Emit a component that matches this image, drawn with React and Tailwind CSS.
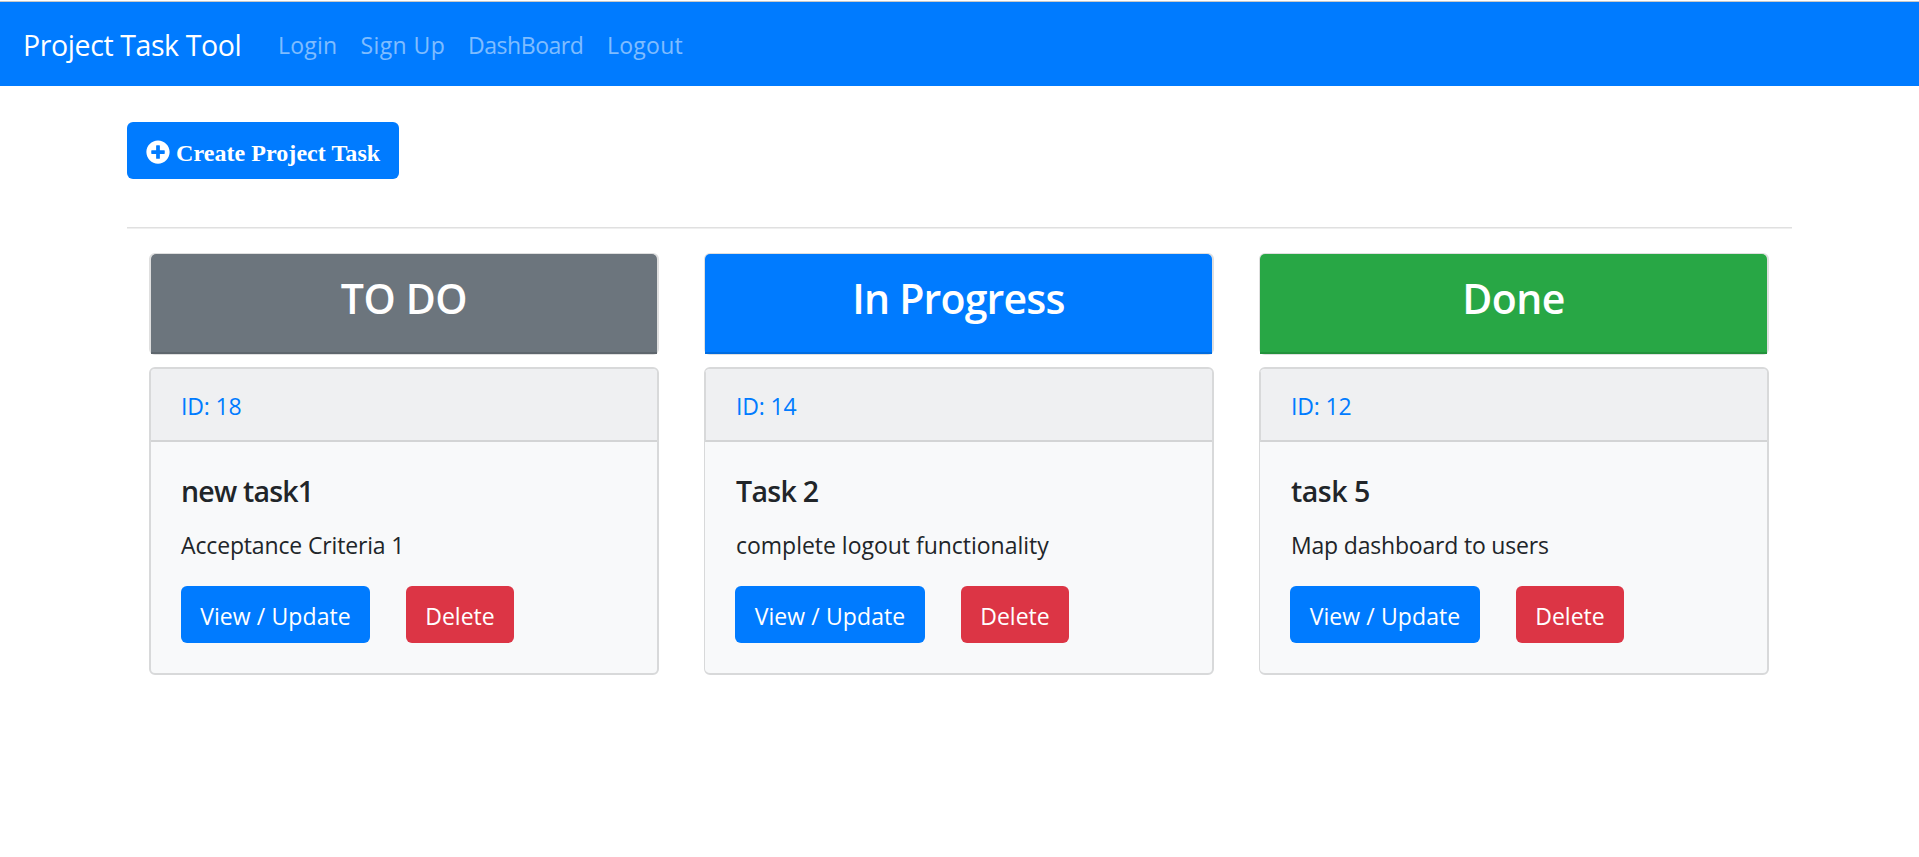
import React from "react";
import { FaPlusCircle } from "react-icons/fa";

const links = [
  { label: "Login", cls: "w-[82.5px] tracking-[0.22px]" },
  { label: "Sign Up", cls: "w-[107.5px] tracking-[0.4px]" },
  { label: "DashBoard", cls: "w-[139px] tracking-[-0.45px]" },
  { label: "Logout", cls: "w-[100px] tracking-[0.25px]" },
];

const columns = [
  {
    title: "TO DO",
    bg: "bg-[#6c757d]",
    titleCls: "tracking-[-0.4px]",
    edge: "border-l-2",
    headEdge: "border-l-0",
    task: {
      id: 18,
      name: "new task1",
      nameCls: "tracking-[-0.8px]",
      text: "Acceptance Criteria 1",
      textCls: "tracking-[-0.15px]",
      buttonCls: "w-[189px]",
    },
  },
  {
    title: "In Progress",
    bg: "bg-[#007bff]",
    titleCls: "tracking-[-0.8px]",
    edge: "border-l",
    headEdge: "border-l",
    task: {
      id: 14,
      name: "Task 2",
      nameCls: "pl-px tracking-[-0.7px]",
      text: "complete logout functionality",
      textCls: "pl-px tracking-[-0.02px]",
      buttonCls: "w-[190px]",
    },
  },
  {
    title: "Done",
    bg: "bg-[#28a745]",
    titleCls: "tracking-[-0.5px]",
    edge: "border-l",
    headEdge: "border-l",
    task: {
      id: 12,
      name: "task 5",
      nameCls: "pl-px tracking-[-0.5px]",
      text: "Map dashboard to users",
      textCls: "pl-px tracking-[-0.19px]",
      buttonCls: "w-[190px]",
    },
  },
];

function Navbar() {
  return (
    <nav className="flex h-[86px] items-center border-t border-white bg-[#007bff] shadow-[inset_0_1px_0_#c8c8c8] pl-[23px] pt-[3px] whitespace-nowrap">
      <a className="w-[255px] text-[28.5px] leading-[45px] tracking-[-0.4px] text-white">
        Project Task Tool
      </a>
      {links.map((l) => (
        <a key={l.label} className={`text-[23px] leading-9 text-white/50 ${l.cls}`}>
          {l.label}
        </a>
      ))}
    </nav>
  );
}

function TaskCard({ task, edge, headEdge }) {
  return (
    <article
      className={`mt-3 flex h-[308px] flex-col overflow-hidden rounded-[6px] border-y-2 border-r-2 border-[#d8d9da] bg-[#f8f9fa] ${edge}`}
    >
      <div
        className={`h-[73px] border-b-2 border-b-[#d3d4d5] border-l-[#d8d9da] bg-[#eff0f2] pl-[30px] pt-[19px] text-[23px] leading-9 tracking-[-0.15px] text-[#007bff] ${headEdge}`}
      >
        ID: {task.id}
      </div>
      <div className="pl-[30px] pt-[31px] whitespace-nowrap">
        <h5 className={`text-[28.5px] leading-9 font-semibold ${task.nameCls}`}>{task.name}</h5>
        <p className={`mt-[18px] text-[23px] leading-9 ${task.textCls}`}>{task.text}</p>
        <div className="mt-[23px] flex gap-9 text-[23px] text-white">
          <button
            className={`flex h-[57px] items-center justify-center rounded-[6px] bg-[#007bff] pt-[3px] tracking-[0.1px] ${task.buttonCls}`}
          >
            View / Update
          </button>
          <button className="flex h-[57px] w-[108px] items-center justify-center rounded-[6px] bg-[#dc3545] pt-[3px]">
            Delete
          </button>
        </div>
      </div>
    </article>
  );
}

export default function App() {
  return (
    <div className="h-[857px] overflow-hidden bg-white font-['Open_Sans','Noto_Sans',sans-serif] text-[#212529]">
      <Navbar />
      <main className="ml-[127px] w-[1665px]">
        <div className="pt-9">
          <button className="flex h-[57px] w-[272px] items-center gap-[6px] rounded-[6px] bg-[#007bff] pl-[19px] text-white whitespace-nowrap">
            <FaPlusCircle className="mt-[3px] size-6 shrink-0" />
            <span className="pt-[5px] font-['Liberation_Serif',serif] text-2xl font-bold tracking-[0.06px]">
              Create Project Task
            </span>
          </button>
        </div>
        <hr className="mt-[48px] h-[2px] border-0 border-t border-[#e0e0e0] bg-[#efefef]" />
        <div className="mt-6 grid grid-cols-3">
          {columns.map((c) => (
            <section key={c.title} className="pr-[23px] pl-[22px]">
              <div className={`h-[102px] rounded-[6px] border-y border-r-2 border-[#dfdfdf] ${c.edge}`}>
                <div className={`h-[100px] rounded-t-[5px] border-b-2 border-black/12 pt-[19px] text-center ${c.bg}`}>
                  <h3 className={`text-[41px] leading-[50px] font-semibold text-white ${c.titleCls}`}>
                    {c.title}
                  </h3>
                </div>
              </div>
              <TaskCard task={c.task} edge={c.edge} headEdge={c.headEdge} />
            </section>
          ))}
        </div>
      </main>
    </div>
  );
}
